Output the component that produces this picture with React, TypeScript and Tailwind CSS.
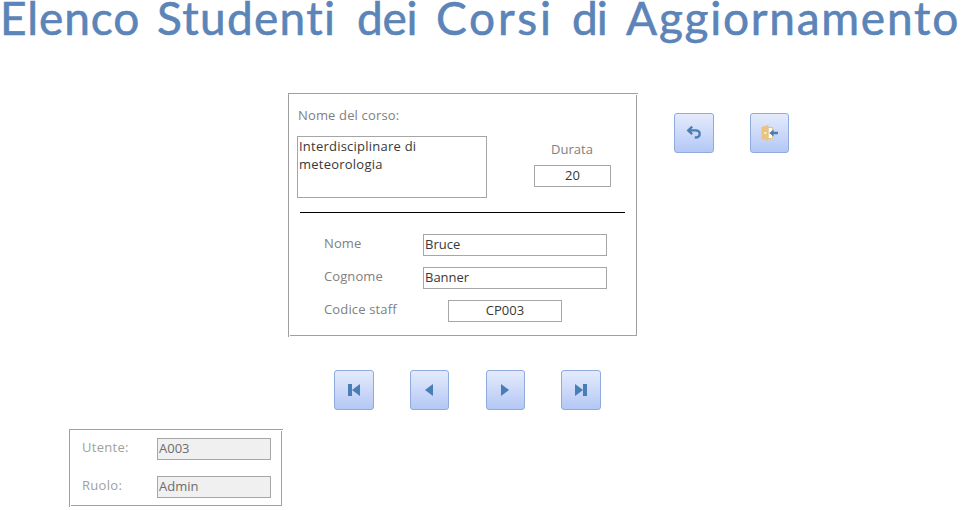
import type { ReactNode } from "react";

const titleWords = [
  { text: "Elenco", style: "w-[157px] tracking-[0.9px]" },
  { text: "Studenti", style: "w-[200px] tracking-[1.3px]" },
  { text: "dei", style: "w-[79px] tracking-[-0.3px]" },
  { text: "Corsi", style: "w-[136px] tracking-[2.8px]" },
  { text: "di", style: "w-[54px] tracking-[-1px]" },
  { text: "Aggiornamento", style: "w-[338px] tracking-[1.75px]" },
];

function Frame({ className, children }: { className: string; children: ReactNode }) {
  return (
    <section className={`relative ${className}`}>
      <span className="absolute left-0 top-0 h-px w-full bg-[#a0a0a0]" />
      <span className="absolute left-0 top-0 h-full w-px bg-[#a0a0a0]" />
      <span className="absolute bottom-px left-[2px] right-px h-px bg-[#a0a0a0]" />
      <span className="absolute bottom-px right-px top-[2px] w-px bg-[#a0a0a0]" />
      {children}
    </section>
  );
}

function Field({ className, children }: { className: string; children: ReactNode }) {
  return (
    <div className={`h-[22px] border border-[#a6a6a6] px-px leading-[19px] ${className}`}>{children}</div>
  );
}

function IconButton({ label, className, children }: { label: string; className: string; children: ReactNode }) {
  return (
    <button
      aria-label={label}
      className={`h-10 shrink-0 rounded-[3px] border border-[#8faadc] bg-linear-to-b from-[#e5ebfb] to-[#b4c7f5] ${className}`}
    >
      <svg viewBox="0 0 38 38" className="h-[38px] w-[38px]" fill="#477eb3">
        {children}
      </svg>
    </button>
  );
}

export default function App() {
  return (
    <main className="h-[510px] w-[964px] bg-white font-['Open_Sans',sans-serif] text-[13px] text-[#383838]">
      <h1 className="flex h-[93px] whitespace-nowrap font-['Lato',sans-serif] text-[46px] leading-[36px] text-[#5b84b8] [-webkit-text-stroke:0.6px_#5b84b8]">
        {titleWords.map((word) => (
          <span key={word.text} className={`shrink-0 ${word.style}`}>
            {word.text}
          </span>
        ))}
      </h1>
      <div className="flex h-[277px] pl-[288px]">
        <Frame className="h-[244px] w-[350px] shrink-0 pl-[9px] pt-[13px]">
          <div className="flex h-[105px]">
            <div className="w-[237px]">
              <div className="h-[30px] pl-px leading-[18px] tracking-[0.15px] text-[#808080]">Nome del corso:</div>
              <div className="h-[62px] w-[190px] border border-[#a6a6a6] pl-px leading-[18px] tracking-[0.23px]">
                Interdisciplinare di
                <br />
                meteorologia
              </div>
            </div>
            <div className="w-[77px] pt-[34px] text-center">
              <div className="h-[25px] pr-px leading-[18px] text-[#808080]">Durata</div>
              <Field className="">20</Field>
            </div>
          </div>
          <div className="ml-[3px] mt-px h-px w-[325px] bg-black" />
          <div className="grid grid-cols-[99px_184px] gap-y-[11px] pl-[27px] pt-[21px]">
            <span className="leading-[18px] tracking-[0.1px] text-[#808080]">Nome</span>
            <Field className="">Bruce</Field>
            <span className="leading-[18px] tracking-[0.1px] text-[#808080]">Cognome</span>
            <Field className="">Banner</Field>
            <span className="leading-[18px] tracking-[0.15px] text-[#808080]">Codice staff</span>
            <Field className="ml-[25px] w-[114px] text-center">CP003</Field>
          </div>
        </Frame>
        <div className="flex gap-9 pl-9 pt-5">
          <IconButton label="Annulla" className="w-10">
            <path
              d="M17.2 12.6 13.2 16.4l4 3.8M13.2 16.4h7.3c2.6 0 4.2 1.4 4.2 3.5s-1.7 3.6-4.9 3.6"
              fill="none"
              stroke="#477eb3"
              strokeWidth="2.3"
            />
          </IconButton>
          <IconButton label="Esci" className="w-[39px]">
            <path d="M17 13.5h4.5v11H17z" fill="#fff" stroke="#eac282" />
            <path d="m10.5 13 7-2v16l-7-2z" fill="#eac282" />
            <circle cx="14.3" cy="19" r="1" fill="#fff" />
            <path d="m18.2 19 4.4-3.6v2.4H27v2.4h-4.4v2.4z" />
          </IconButton>
        </div>
      </div>
      <div className="flex h-[59px] pl-[334px]">
        <IconButton label="Primo record" className="mr-9 w-10">
          <path d="M13 13h4v12h-4zM25 13v12l-8-6z" />
        </IconButton>
        <IconButton label="Record precedente" className="mr-[37px] w-[39px]">
          <path d="M22 13v12l-8-6z" />
        </IconButton>
        <IconButton label="Record successivo" className="mr-9 w-[39px]">
          <path d="M14 13v12l8-6z" />
        </IconButton>
        <IconButton label="Ultimo record" className="w-10">
          <path d="M21 13h4v12h-4zM13 13v12l8-6z" />
        </IconButton>
      </div>
      <Frame className="ml-[69px] grid h-[78px] w-[214px] grid-cols-[75px_114px] content-start gap-y-4 pl-[13px] pt-[9px] text-[#6d6d6d]">
        <span className="leading-[18px] tracking-[0.3px] text-[#a0a0a0]">Utente:</span>
        <Field className="bg-[#f0f0f0]">A003</Field>
        <span className="leading-[18px] tracking-[0.3px] text-[#a0a0a0]">Ruolo:</span>
        <Field className="bg-[#f0f0f0]">Admin</Field>
      </Frame>
    </main>
  );
}
